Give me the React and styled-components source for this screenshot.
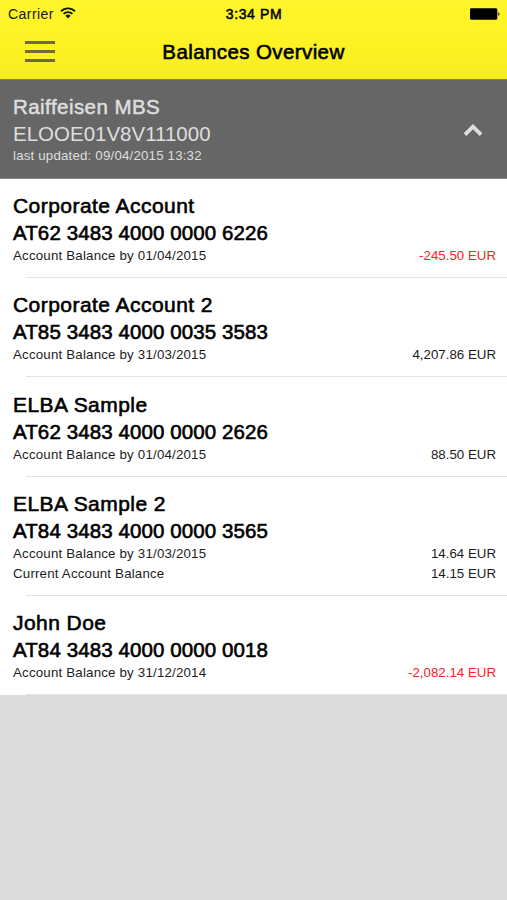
import React, { useState } from "react";
import styled, { createGlobalStyle } from "styled-components";

const accounts = [
  {
    name: "Corporate Account",
    iban: "AT62 3483 4000 0000 6226",
    balances: [{ label: "Account Balance by 01/04/2015", amount: "-245.50" }],
  },
  {
    name: "Corporate Account 2",
    iban: "AT85 3483 4000 0035 3583",
    balances: [{ label: "Account Balance by 31/03/2015", amount: "4,207.86" }],
  },
  {
    name: "ELBA Sample",
    iban: "AT62 3483 4000 0000 2626",
    balances: [{ label: "Account Balance by 01/04/2015", amount: "88.50" }],
  },
  {
    name: "ELBA Sample 2",
    iban: "AT84 3483 4000 0000 3565",
    balances: [
      { label: "Account Balance by 31/03/2015", amount: "14.64" },
      { label: "Current Account Balance", amount: "14.15" },
    ],
  },
  {
    name: "John Doe",
    iban: "AT84 3483 4000 0000 0018",
    balances: [{ label: "Account Balance by 31/12/2014", amount: "-2,082.14" }],
  },
];

const App = () => {
  const [open, setOpen] = useState(true);

  return (
    <Container>
      <GlobalStyle />
      <Header>
        <StatusBar>
          <Carrier>
            <span>Carrier</span>
            <Wifi />
          </Carrier>
          <Time>3:34 PM</Time>
          <Battery />
        </StatusBar>
        <NavBar>
          <MenuButton aria-label="Menu">
            <Line />
            <Line />
            <Line />
          </MenuButton>
          <Title>Balances Overview</Title>
        </NavBar>
      </Header>

      <Group onClick={() => setOpen(!open)}>
        <div>
          <GroupName>Raiffeisen MBS</GroupName>
          <GroupId>ELOOE01V8V111000</GroupId>
          <Updated>last updated: 09/04/2015 13:32</Updated>
        </div>
        <Chevron open={open} />
      </Group>

      {open
        ? accounts.map(({ name, iban, balances }) => (
            <Row key={name}>
              <Name>{name}</Name>
              <Iban>{iban}</Iban>
              {balances.map(({ label, amount }) => (
                <Balance key={label}>
                  <Label>{label}</Label>
                  <Amount $negative={amount.startsWith("-")}>
                    {amount} EUR
                  </Amount>
                </Balance>
              ))}
            </Row>
          ))
        : null}
    </Container>
  );
};

export default App;

const Wifi = () => (
  <svg width="16" height="12" viewBox="0 0 16 12">
    <g fill="none" stroke="#17170a" strokeWidth="1.8">
      <path d="M1 4.3A10 10 0 0 1 15 4.3" />
      <path d="M3.5 6.9A6.4 6.4 0 0 1 12.5 6.9" />
    </g>
    <path d="M8 11.4L5.4 8.7A3.7 3.7 0 0 1 10.6 8.7Z" fill="#17170a" />
  </svg>
);

const Battery = () => (
  <svg width="30" height="12" viewBox="0 0 30 12">
    <rect x="0" y="0.3" width="27.3" height="11.4" rx="1.4" fill="#000" />
    <path d="M28.1 4.2C30 4.6 30 7.4 28.1 7.8Z" fill="#3c3800" />
  </svg>
);

const Chevron = ({ open }) => (
  <svg width="20" height="14" viewBox="0 0 20 14">
    <path
      d={open ? "M2 11.6L10 3.6L18 11.6" : "M2 3.6L10 11.6L18 3.6"}
      fill="none"
      stroke="#dedede"
      strokeWidth="3.8"
    />
  </svg>
);

const GlobalStyle = createGlobalStyle`
  body {
    margin: 0;
    background-color: #dcdcdc;
  }
`;

const Container = styled.div`
  min-height: 900px;
  background-color: #dcdcdc;
  font-family: "Liberation Sans", Arial, sans-serif;
  color: #000;
  white-space: nowrap;
`;

const Header = styled.div`
  box-sizing: border-box;
  height: 79.5px;
  background: linear-gradient(#fff52c, #fcf222 60%, #f8ec22);
  border-bottom: 1px solid #8c861f;
`;

const StatusBar = styled.div`
  display: grid;
  grid-template-columns: 1fr auto 1fr;
  align-items: center;
  height: 27px;
  padding: 0 7px 0 8px;
  font-size: 14px;

  > svg {
    justify-self: end;
  }
`;

const Carrier = styled.div`
  display: flex;
  align-items: center;
  gap: 6px;
  color: #17170a;
  letter-spacing: 0.45px;

  svg {
    margin-bottom: 2px;
  }
`;

const Time = styled.span`
  font-size: 14px;
  -webkit-text-stroke: 0.5px #000;
  letter-spacing: 0.6px;
`;

const NavBar = styled.div`
  display: grid;
  grid-template-columns: 1fr auto 1fr;
  align-items: center;
  height: 49px;
  padding: 0 25px;
`;

const MenuButton = styled.button`
  display: flex;
  flex-direction: column;
  gap: 6px;
  width: 30px;
  padding: 0;
  border: none;
  background: none;
`;

const Line = styled.span`
  height: 3px;
  background-color: #6f6a3e;
`;

const Title = styled.h1`
  margin: 0;
  padding-top: 1px;
  font-size: 20.5px;
  font-weight: normal;
  -webkit-text-stroke: 0.6px #000;
  letter-spacing: 0.4px;
`;

const Group = styled.div`
  box-sizing: border-box;
  display: flex;
  justify-content: space-between;
  height: 99px;
  padding: 13px 24px 0 13px;
  background-color: #666;
  border-bottom: 1px solid #8a8a8a;
  color: #dedede;

  svg {
    margin-top: 30px;
  }
`;

const GroupName = styled.div`
  line-height: 27px;
  font-size: 20.5px;
  -webkit-text-stroke: 0.5px #dedede;
  letter-spacing: 0.45px;
`;

const GroupId = styled.div`
  line-height: 27px;
  font-size: 20.5px;
`;

const Updated = styled.div`
  line-height: 18px;
  font-size: 13.3px;
  letter-spacing: 0.18px;
`;

const Row = styled.div`
  padding: 13.6px 11px 12.3px 13px;
  background-color: #fff;
  /* divider starts a bit to the right of the text */
  background-image: linear-gradient(#e4e4e4, #e4e4e4);
  background-repeat: no-repeat;
  background-size: 100% 1px;
  background-position: 26px 100%;
`;

const Name = styled.div`
  line-height: 27px;
  font-size: 21px;
  -webkit-text-stroke: 0.6px #000;
  letter-spacing: 0.45px;
`;

const Iban = styled(Name)`
  font-size: 20.5px;
  letter-spacing: 0.1px;
`;

const Balance = styled.div`
  display: flex;
  justify-content: space-between;
  line-height: 19.5px;
  font-size: 13.3px;
`;

const Label = styled.span`
  color: #1c1c1c;
  letter-spacing: 0.19px;
`;

const Amount = styled.span`
  color: ${({ $negative }) => ($negative ? "#f5221d" : "#1c1c1c")};
`;
